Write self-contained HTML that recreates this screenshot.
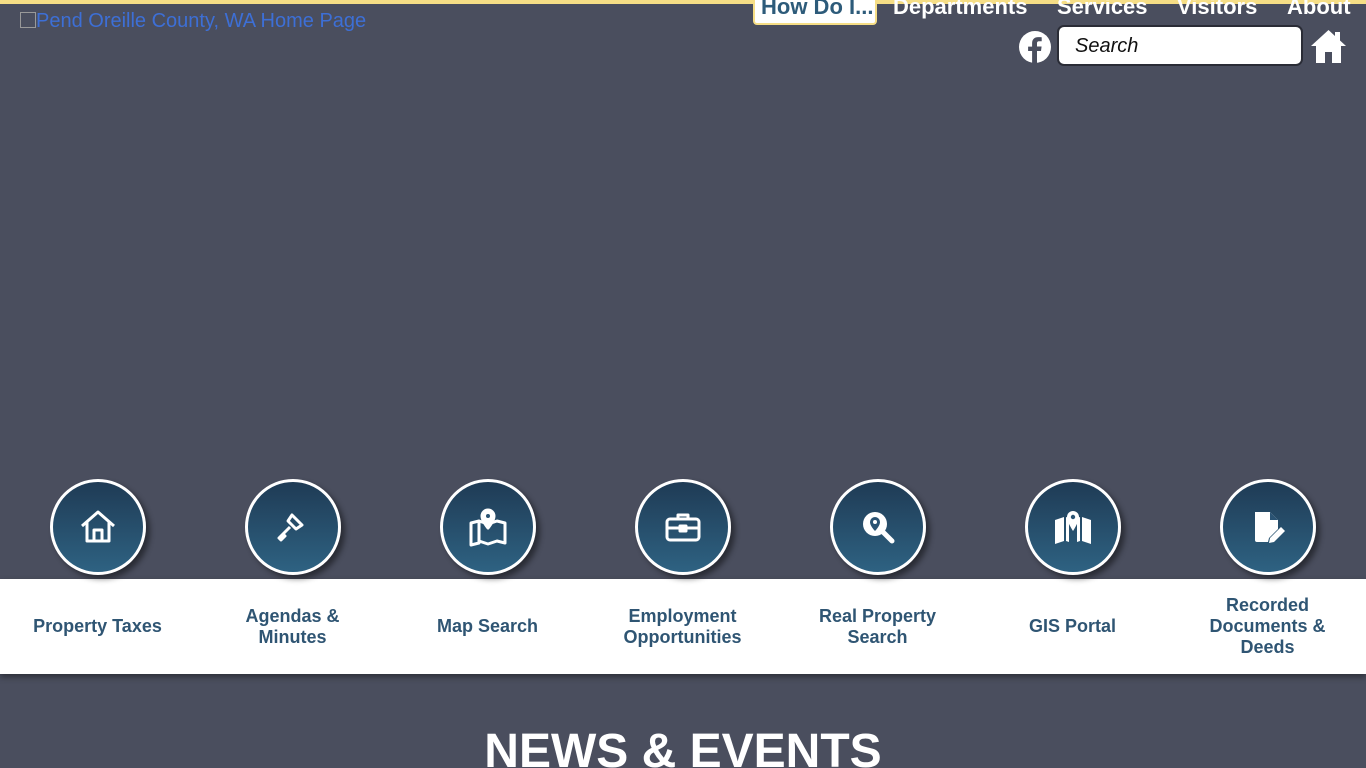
<!DOCTYPE html>
<html style="overflow:hidden;height:768px"><head><meta charset="utf-8"><style>
*{margin:0;padding:0;box-sizing:border-box}
body{width:1366px;height:768px;overflow:hidden;background:#4a4e5e;font-family:"Liberation Sans",Arial,sans-serif;position:relative}
.top{position:absolute;left:0;top:0;width:1366px;height:4px;background:#f6de86}
.logo{position:absolute;left:20px;top:10px;color:#3d6fd6;font-size:20px;white-space:nowrap}
.logo span{display:inline-block;width:16px;height:16px;border:1px solid #999;vertical-align:-1px}
.nav{position:absolute;top:-6px;font-size:22px;font-weight:bold;color:#fff}
.how{position:absolute;left:753px;top:-4px;width:124px;height:29px;background:#fff;border:2px solid #f6de86;border-top:none;border-radius:0 0 4px 4px;color:#2d5b7a;font-size:22px;font-weight:bold;padding-left:6px;line-height:22px}
.search{position:absolute;left:1057px;top:25px;width:246px;height:41px;background:#fff;border-radius:7px;border:2px solid #2a2c36;font-style:italic;font-size:20px;padding:8px 16px;color:#111}
.band{position:absolute;left:0;top:579px;width:1366px;height:95px;background:#fff;box-shadow:0 3px 6px rgba(0,0,0,.4)}
.item{position:absolute;top:479px;width:195px;text-align:center}
.c{width:96px;height:96px;margin:0 auto;border-radius:50%;border:3px solid #fff;background:linear-gradient(#1f3b55,#2e6282);box-shadow:4px 4px 6px rgba(0,0,0,.45);display:flex;align-items:center;justify-content:center}
.lab{position:absolute;top:100px;left:0;width:195px;height:95px;display:flex;align-items:center;justify-content:center;color:#2f5573;font-weight:bold;font-size:18px;line-height:21px;padding:0 15px}
h2{position:absolute;left:0;width:1366px;text-align:center;top:724px;color:#fff;font-size:48px;font-weight:bold;line-height:56px}
</style></head><body>
<div class="top"></div>
<div class="logo"><span></span>Pend Oreille County, WA Home Page</div>
<div class="how">How Do I...</div>
<div class="nav" style="left:893px">Departments</div>
<div class="nav" style="left:1057px">Services</div>
<div class="nav" style="left:1177px">Visitors</div>
<div class="nav" style="left:1287px">About</div>
<svg style="position:absolute;left:1019px;top:31px" width="32" height="32" viewBox="0 0 32 32"><circle cx="16" cy="16" r="16" fill="#fff"/><path d="M18 32V20h4l.6-4.5H18v-3c0-1.3.4-2.2 2.2-2.2h2.5V6.3c-.4-.1-1.9-.2-3.6-.2-3.6 0-6 2.2-6 6.2v3.3h-4V20h4v12z" fill="#4a4e5e"/></svg>
<div class="search">Search</div>
<svg style="position:absolute;left:1310px;top:29px" width="37" height="34" viewBox="0 0 37 34"><path d="M18.5 1L1 17h5v17h9V23h7v11h9V17h5L30 11.5V3h-5v4z" fill="#fff"/></svg>
<div class="band"></div>

<div class="item" style="left:0"><div class="c"><svg width="40" height="40" viewBox="0 0 40 40" fill="none" stroke="#fff" stroke-width="3" stroke-linejoin="round"><path d="M4 19L20 5l16 14M9 15v19h22V15M16 34V23h8v11"/></svg></div><div class="lab">Property Taxes</div></div>
<div class="item" style="left:195px"><div class="c"><svg width="40" height="40" viewBox="0 0 40 40" fill="none" stroke="#fff" stroke-width="3" stroke-linejoin="round"><path d="M19 8l10 10-6 4-8-8zM17 20l-8 8M6 31l4-4 2 2-4 4z"/></svg></div><div class="lab">Agendas &amp; Minutes</div></div>
<div class="item" style="left:390px"><div class="c"><svg width="42" height="40" viewBox="0 0 42 40" fill="none" stroke="#fff" stroke-width="3" stroke-linejoin="round"><path d="M4 16l8-2v22l-8 2zM12 14l6 2M24 16l6-2 8 2v20l-8-2-9 3-9-3"/><path d="M21 3a6 6 0 016 6c0 5-6 12-6 12s-6-7-6-12a6 6 0 016-6z" fill="#fff"/><circle cx="21" cy="9" r="2" fill="#2a5373" stroke="none"/></svg></div><div class="lab">Map Search</div></div>
<div class="item" style="left:585px"><div class="c"><svg width="40" height="40" viewBox="0 0 40 40" fill="none" stroke="#fff" stroke-width="3" stroke-linejoin="round"><rect x="4" y="12" width="32" height="21" rx="3"/><path d="M15 12V8h10v4M4 21h32"/><rect x="17" y="19" width="6" height="5" fill="#fff"/></svg></div><div class="lab">Employment Opportunities</div></div>
<div class="item" style="left:780px"><div class="c"><svg width="40" height="40" viewBox="0 0 40 40"><circle cx="17" cy="17" r="12" fill="#fff"/><path d="M25 25l9 9" stroke="#fff" stroke-width="5" stroke-linecap="round"/><path d="M17 10a5 5 0 015 5c0 4-5 9-5 9s-5-5-5-9a5 5 0 015-5z" fill="#2a5373"/><circle cx="17" cy="15" r="2" fill="#fff"/></svg></div><div class="lab">Real Property Search</div></div>
<div class="item" style="left:975px"><div class="c"><svg width="42" height="40" viewBox="0 0 42 40" fill="#fff"><path d="M3 13l9-3v24l-9 3zM30 10l9 3v24l-9-3zM14 10l3 1v24l-3-1zM25 11l3-1v24l-3 1z"/><path d="M21 4a6 6 0 016 6c0 5-6 14-6 14s-6-9-6-14a6 6 0 016-6z"/><circle cx="21" cy="10" r="2.2" fill="#2a5373"/></svg></div><div class="lab">GIS Portal</div></div>
<div class="item" style="left:1170px"><div class="c"><svg width="40" height="40" viewBox="0 0 40 40" fill="#fff"><path d="M7 5h15l8 8v9l-9 9-1 4H9a2 2 0 01-2-2z"/><path d="M22 5v8h8" fill="#2a5373"/><path d="M33 20l4 4-11 11-5 1 1-5z"/></svg></div><div class="lab">Recorded Documents &amp; Deeds</div></div>

<h2>NEWS &amp; EVENTS</h2>
</body></html>
